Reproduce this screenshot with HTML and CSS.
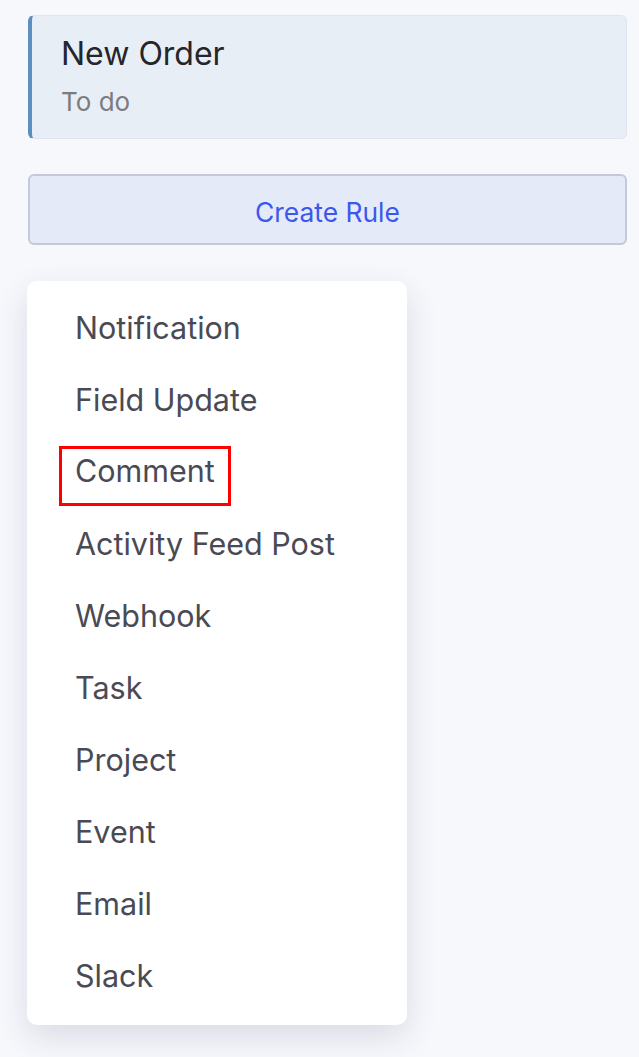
FILE: index.html
```html
<!DOCTYPE html>
<html lang="en">

<head>
    <meta charset="UTF-8">
    <meta name="viewport" content="width=device-width, initial-scale=1.0">
    <title>Rules</title>
    <link rel="stylesheet" href="styles.css">
</head>

<body>
    <div class="stage">
        <div class="stage-card">
            <h2 class="stage-name">New Order</h2>
            <p class="stage-status">To do</p>
        </div>

        <button class="create-rule" type="button">Create Rule</button>

        <ul class="action-menu">
            <li>Notification</li>
            <li>Field Update</li>
            <li><span class="marked">Comment</span></li>
            <li>Activity Feed Post</li>
            <li>Webhook</li>
            <li>Task</li>
            <li>Project</li>
            <li>Event</li>
            <li>Email</li>
            <li>Slack</li>
        </ul>
    </div>
</body>
</html>
```

FILE: styles.css
```css
* {
    padding: 0;
    margin: 0;
    box-sizing: border-box;
}
body {
    font-family: Inter, "Noto Sans", sans-serif;
    background: #f7f8fc;
    min-height: 100vh;
}
.stage {
    padding: 15px 12px 0 28px;
    display: flex;
    flex-direction: column;
    align-items: flex-start;
}
.stage-card {
    width: 100%;
    height: 124px;
    background: #e8eef6;
    border: 1px solid #dfe5ee;
    border-left: 4px solid #5b8fc0;
    border-radius: 6px;
    padding: 20px 29px;
}
.stage-name {
    font-size: 32px;
    font-weight: 400;
    color: #25252b;
    line-height: 36px;
}
.stage-status {
    font-size: 26px;
    color: #7b7b80;
    line-height: 30px;
    margin-top: 15px;
}
.create-rule {
    width: 100%;
    height: 71px;
    margin-top: 35px;
    padding-top: 4px;
    background: #e4eaf8;
    border: 2px solid #c3c9d8;
    border-radius: 6px;
    font-family: Inter, "Noto Sans", sans-serif;
    font-size: 26.4px;
    color: #3b57ee;
}
.action-menu {
    list-style: none;
    width: 380px;
    margin: 36px 0 0 -1px;
    padding: 10px 0 14px;
    background: #fff;
    border-radius: 10px;
    box-shadow: 0 12px 32px rgba(40, 50, 90, 0.14);
}
.action-menu li {
    height: 72px;
    display: flex;
    align-items: center;
    padding-left: 48px;
    font-size: 30.5px;
    color: #4a4a54;
}
.marked {
    position: relative;
    display: inline-block;
    line-height: 36px;
}
.marked::after {
    content: "";
    position: absolute;
    left: -16px;
    right: -16px;
    top: -7px;
    bottom: -17px;
    border: 3px solid #f00;
}
```
